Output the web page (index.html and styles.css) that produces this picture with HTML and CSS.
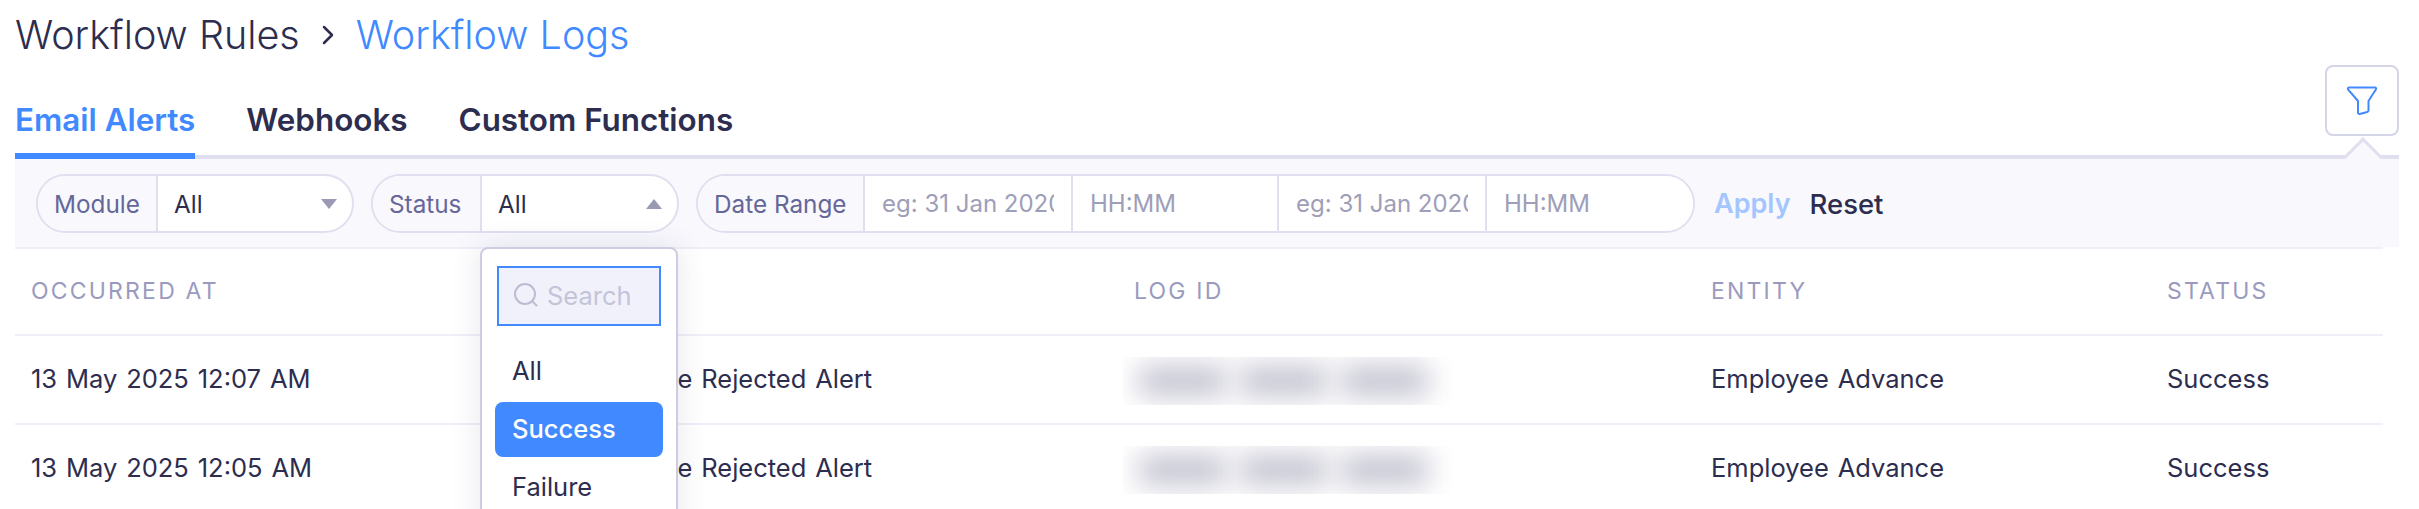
FILE: index.html
```html
<!DOCTYPE html>
<html lang="en">
<head>
    <meta charset="UTF-8">
    <meta name="viewport" content="width=device-width, initial-scale=1.0">
    <title>Workflow Logs</title>
    <link rel="stylesheet" href="styles.css">
</head>
<body>
    <div class="breadcrumb">
        <span>Workflow Rules</span>
        <svg class="crumb-sep" width="12" height="20" viewBox="0 0 12 20"><path d="M2 2l8 8-8 8" fill="none" stroke="#2c2d4f" stroke-width="2.500" stroke-linecap="round" stroke-linejoin="round"/></svg>
        <span class="crumb-current">Workflow Logs</span>
    </div>

    <div class="tabs-row">
        <div class="tabs">
            <div class="tab active">Email Alerts</div>
            <div class="tab">Webhooks</div>
            <div class="tab">Custom Functions</div>
        </div>
        <button class="filter-btn">
            <svg width="32" height="32" viewBox="0 0 32 32"><path d="M3 2.500h26c1 0 1.500 1 1 1.800L22.500 16v9.500c0 .8-.4 1.300-1.200 1.500l-7.500 2c-1 .2-1.800-.3-1.800-1.300V16L2 4.300c-.5-.8 0-1.800 1-1.800z" fill="none" stroke="#4189ff" stroke-width="2" stroke-linejoin="round"/></svg>
        </button>
        <span class="filter-arrow"></span>
    </div>

    <!-- filter bar -->
    <div class="filters">
        <div class="pill module-pill">
            <div class="pill-label">Module</div>
            <div class="pill-value">All<span class="caret down"></span></div>
        </div>
        <div class="pill status-pill">
            <div class="pill-label">Status</div>
            <div class="pill-value">All<span class="caret up"></span></div>
        </div>
        <div class="pill date-pill">
            <div class="pill-label">Date Range</div>
            <input class="date-input" type="text" placeholder="eg: 31 Jan 2020">
            <input class="time-input" type="text" placeholder="HH:MM">
            <input class="date-input" type="text" placeholder="eg: 31 Jan 2020">
            <input class="time-input last" type="text" placeholder="HH:MM">
        </div>
        <a class="apply">Apply</a>
        <a class="reset">Reset</a>
    </div>

    <table class="logs">
        <colgroup>
            <col class="col-time">
            <col class="col-name">
            <col class="col-id">
            <col class="col-entity">
            <col>
        </colgroup>
        <thead>
            <tr>
                <th>Occurred At</th>
                <th></th>
                <th>Log ID</th>
                <th>Entity</th>
                <th>Status</th>
            </tr>
        </thead>
        <tbody>
            <tr>
                <td>13 May 2025 12:07 AM</td>
                <td>Advance Rejected Alert</td>
                <td><div class="redacted"><i class="blob"></i><i class="blob"></i><i class="blob"></i></div></td>
                <td>Employee Advance</td>
                <td>Success</td>
            </tr>
            <tr>
                <td>13 May 2025 12:05 AM</td>
                <td>Advance Rejected Alert</td>
                <td><div class="redacted"><i class="blob"></i><i class="blob"></i><i class="blob"></i></div></td>
                <td>Employee Advance</td>
                <td>Success</td>
            </tr>
        </tbody>
    </table>

    <!-- status dropdown, open -->
    <div class="dropdown">
        <div class="search">
            <svg width="26" height="26" viewBox="0 0 26 26"><circle cx="12" cy="12" r="10" fill="none" stroke="#bcbcd2" stroke-width="2"/><path d="M19 19l5 5" stroke="#bcbcd2" stroke-width="2"/></svg>
            <span>Search</span>
        </div>
        <div class="option">All</div>
        <div class="option selected">Success</div>
        <div class="option">Failure</div>
    </div>
</body>
</html>
```

FILE: styles.css
```css
* {
    box-sizing: border-box;
}

body {
    margin: 0;
    height: 509px;
    overflow: hidden;
    position: relative;
    background-color: #fff;
    color: #2c2d4f;
    font-family: Inter, "Liberation Sans", sans-serif;
    font-size: 25.5px;
}

/* Breadcrumb */
.breadcrumb {
    display: flex;
    align-items: center;
    gap: 22px;
    height: 70px;
    padding: 0 0 0 15px;
    margin-bottom: -35px;
    font-size: 39.5px;
    font-weight: 300;
}

.crumb-current {
    color: #4189ff;
}

/* Tabs and filter button */
.tabs-row {
    position: relative;
    display: flex;
    justify-content: space-between;
    align-items: flex-end;
    height: 120px;
    padding: 0 20px 0 15px;
}

.tabs {
    display: flex;
    gap: 51px;
    margin-bottom: -4px;
}

.tab {
    height: 58px;
    font-size: 31.4px;
    line-height: 38px;
    font-weight: 600;
}

.tab.active {
    color: #4189ff;
    border-bottom: 6px solid #4189ff;
}

.filter-btn {
    width: 74px;
    height: 71px;
    margin-bottom: 19px;
    padding: 0;
    display: flex;
    align-items: center;
    justify-content: center;
    background: #fff;
    border: 2px solid #d5d5e8;
    border-radius: 8px;
}

.filter-arrow {
    position: absolute;
    right: 42px;
    bottom: -16px;
    width: 28px;
    height: 28px;
    background: #f8f8fd;
    border-top: 3px solid #dfdfef;
    border-left: 3px solid #dfdfef;
    transform: rotate(45deg);
}

/* Filter bar */
.filters {
    display: flex;
    align-items: center;
    height: 92px;
    margin: 0 20px 0 15px;
    padding: 11px 21px 10px;
    background: #f8f8fd;
    border-top: 4px solid #dfdfef;
}

.pill {
    display: flex;
    height: 59px;
    margin-right: 17px;
    background: #fff;
    border: 2px solid #dfdfef;
    border-radius: 30px;
    overflow: hidden;
    font-size: 24.3px;
}

.pill-label {
    display: flex;
    flex: none;
    align-items: center;
    padding: 0 0 0 16px;
    background: #f8f8fd;
    border-right: 2px solid #dfdfef;
    color: #65669a;
    white-space: nowrap;
}

.pill-value {
    display: flex;
    flex: 1;
    align-items: center;
    justify-content: space-between;
    padding: 0 15px 0 16px;
}

.module-pill {
    width: 318px;
}

.status-pill {
    width: 308px;
}

.module-pill .pill-label {
    width: 120px;
}

.status-pill .pill-label {
    width: 109px;
}

.caret {
    width: 0;
    height: 0;
    border-left: 8px solid transparent;
    border-right: 8px solid transparent;
}

.caret.down {
    border-top: 10px solid #9a9ab5;
}

.caret.up {
    border-bottom: 10px solid #9a9ab5;
}

.date-pill {
    width: 999px;
    margin-right: 19px;
}

.date-pill .pill-label {
    width: 167px;
}

.date-input,
.time-input {
    height: 100%;
    padding: 0 17px;
    border: none;
    border-right: 2px solid #dfdfef;
    outline: none;
    font-family: inherit;
    font-size: 24px;
    background: #fff;
}

.date-input {
    width: 208px;
}

.time-input {
    width: 206px;
}

.time-input.last {
    flex: 1;
    min-width: 0;
    border-right: none;
}

input::placeholder {
    color: #9e9eb8;
    opacity: 1;
}

.apply {
    color: #a3c6ff;
    font-weight: 600;
    font-size: 27px;
    margin-right: 19px;
}

.reset {
    color: #2c2d4f;
    font-weight: 500;
    font-size: 27.5px;
}

/* Table */
.logs {
    width: 2368px;
    margin-left: 15px;
    border-collapse: collapse;
    table-layout: fixed;
}

.col-time {
    width: 555px;
}

.col-name {
    width: 548px;
}

.col-id {
    width: 577px;
}

.col-entity {
    width: 456px;
}

.logs th {
    height: 87px;
    padding: 0 16px 2px;
    text-align: left;
    font-size: 23px;
    font-weight: 400;
    letter-spacing: 2.200px;
    text-transform: uppercase;
    color: #9a9abf;
    border-top: 2px solid #efeff8;
    border-bottom: 2px solid #efeff8;
}

.logs td {
    height: 89px;
    padding: 0 16px 2px;
    border-bottom: 2px solid #efeff8;
    white-space: nowrap;
    word-spacing: 1.700px;
}

/* blurred log ids */
.redacted {
    display: flex;
    align-items: center;
    gap: 14px;
    width: 330px;
    height: 48px;
    margin: 5px 0 0 -11px;
    padding-left: 16px;
    overflow: hidden;
}

.blob {
    flex: none;
    width: 87px;
    height: 30px;
    background: #c2c2d0;
    filter: blur(14px);
}

/* Dropdown */
.dropdown {
    position: absolute;
    top: 247px;
    left: 480px;
    width: 198px;
    height: 300px;
    padding: 17px 13px;
    background: #fff;
    border: 2px solid #cdcde2;
    border-radius: 8px;
    box-shadow: 0 0 30px rgba(60, 60, 110, 0.12);
}

.search {
    display: flex;
    align-items: center;
    gap: 8px;
    height: 60px;
    margin: 0 2px 18px;
    padding: 0 0 2px 14px;
    background: #f1f1fc;
    border: 2px solid #4189ff;
    color: #c4c4d8;
}

.option {
    height: 55px;
    display: flex;
    align-items: center;
    padding: 0 17px 2px;
    margin-bottom: 3px;
    border-radius: 8px;
}

.option.selected {
    background: #4189ff;
    color: #fff;
    font-weight: 500;
}
```
